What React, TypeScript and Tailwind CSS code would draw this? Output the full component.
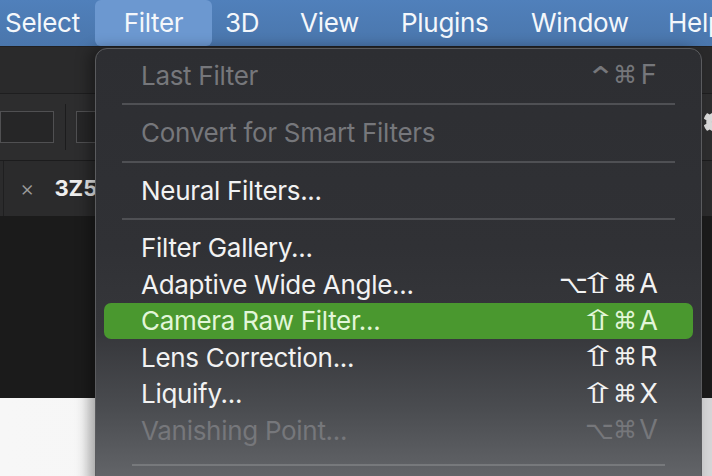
import React from "react";
import { FaCog } from "react-icons/fa";

type Row =
  | { kind: "sep"; cls?: string }
  | { kind: "item"; label: string; keys?: string; disabled?: boolean; active?: boolean };

const rows: Row[] = [
  { kind: "item", label: "Last Filter", keys: "⌃⌘F", disabled: true },
  { kind: "sep" },
  { kind: "item", label: "Convert for Smart Filters", disabled: true },
  { kind: "sep" },
  { kind: "item", label: "Neural Filters..." },
  { kind: "sep" },
  { kind: "item", label: "Filter Gallery..." },
  { kind: "item", label: "Adaptive Wide Angle...", keys: "⌥⇧⌘A" },
  { kind: "item", label: "Camera Raw Filter...", keys: "⇧⌘A", active: true },
  { kind: "item", label: "Lens Correction...", keys: "⇧⌘R" },
  { kind: "item", label: "Liquify...", keys: "⇧⌘X" },
  { kind: "item", label: "Vanishing Point...", keys: "⌥⌘V", disabled: true },
  { kind: "sep", cls: "last" },
];

function Glyph({ k }: { k: string }) {
  if (/[A-Z]/.test(k))
    return <span className="w-[19px] text-center font-['Inter',sans-serif] text-[27px]">{k}</span>;
  if (k === "⇧")
    return (
      <span className="flex w-[22px] justify-center overflow-visible">
        <span className="inline-block scale-x-[1.6] font-['DejaVu_Sans',sans-serif] text-[28px] leading-[30px]">{k}</span>
      </span>
    );
  if (k === "⌥")
    return <span className="w-[24px] text-center font-['DejaVu_Sans',sans-serif] text-[25px]">{k}</span>;
  if (k === "⌃")
    return (
      <span className="flex w-[18px] justify-center">
        <span className="inline-block mt-[6px] scale-x-[1.2] font-['DejaVu_Sans',sans-serif] text-[30px] leading-[30px]">{k}</span>
      </span>
    );
  return <span className="w-[22px] text-center font-['DejaVu_Sans',sans-serif] text-[24px]">{k}</span>;
}

function Keys({ keys }: { keys: string }) {
  return (
    <div className="flex h-full items-center gap-[4px]">
      {Array.from(keys).map((k, i) => (
        <Glyph key={i} k={k} />
      ))}
    </div>
  );
}

export default function App() {
  return (
    <div className="relative w-[712px] h-[476px] overflow-hidden bg-[#1b1b1b] font-['Inter',sans-serif]">
      {/* macOS menu bar */}
      <div className="flex h-[46px] items-stretch overflow-hidden bg-[linear-gradient(to_bottom,#5080bb,#4a76ac)] pl-[5px] text-[26px] leading-[46px] text-[#f4f7fb] tracking-[-0.3px]">
        <div className="w-[90px] shrink-0">Select</div>
        <div className="w-[117px] shrink-0 rounded-md bg-[#6c98d0] text-center">Filter</div>
        <div className="w-[75px] shrink-0 pl-[13px]">3D</div>
        <div className="w-[101px] shrink-0 pl-[13px]">View</div>
        <div className="w-[130px] shrink-0 pl-[13px]">Plugins</div>
        <div className="w-[137px] shrink-0 pl-[13px]">Window</div>
        <div className="shrink-0 pl-[13px] whitespace-nowrap">Help</div>
      </div>

      {/* app header row */}
      <div className="h-[47px] border-t border-[#202022] bg-[#2a2a2b]" />
      {/* options toolbar */}
      <div className="relative flex h-[67px] items-center border-t border-[#1e1e1f] bg-[#2d2d2e]">
        <div className="h-[32px] w-[54px] border border-[#505052] bg-[#262627]" />
        <div className="ml-[11px] h-[46px] w-px bg-[#1c1c1d]" />
        <div className="ml-[10px] h-[32px] w-[60px] border border-[#505052] bg-[#262627]" />
        <FaCog className="absolute left-[703px] top-[15px] text-[#d8d8d8]" size={26} />
      </div>
      {/* document tab row */}
      <div className="flex h-[56px] items-center border-t border-[#1c1c1d] bg-[#2b2b2c]">
        <div className="ml-[3px] h-full w-px bg-[#1f1f20]" />
        <span className="ml-[16px] text-[22px] font-light text-[#9b9b9b]">×</span>
        <span className="ml-[20px] text-[22px] font-bold text-[#eeeeee]">3Z5</span>
      </div>
      {/* canvas area */}
      <div className="h-[182px] bg-[#1b1b1b]" />
      <div className="flex h-[78px]">
        <div className="flex-1 bg-[linear-gradient(to_right,#f7f7f7_0%,#f5f5f5_70%,#d9d9d9_100%)]" />
        <div className="w-[10px] bg-[#d5d5d7]" />
      </div>

      {/* Filter dropdown menu */}
      <div className="absolute left-[95px] top-[48px] h-[440px] w-[607px] rounded-t-[12px] border border-[#5a5b5e] bg-[linear-gradient(to_bottom,#2d2e32_0%,#303135_45%,#36373b_65%,#4a4c50_82%,#66686c_100%)] pt-[8px] shadow-[-6px_0_14px_rgba(0,0,0,0.35)]">
        {rows.map((r, i) =>
          r.kind === "sep" ? (
            r.cls === "last" ? (
              <div key={i} className="mx-[36px] pt-[15px]">
                <div className="h-[2px] bg-[#77797c]" />
              </div>
            ) : (
              <div key={i} className="mx-[26px] flex h-[21px] items-center">
                <div className="h-[2px] w-full bg-[#4f5054]" />
              </div>
            )
          ) : (
            <div
              key={i}
              className={
                "mx-[8px] flex h-[36.5px] items-center justify-between rounded-[7px] pl-[37px] pr-[35px] text-[26px] tracking-[-0.3px] " +
                (r.active
                  ? "bg-[#4a982f] text-[#e2f6d9]"
                  : r.disabled
                  ? "text-[#76777b]"
                  : "text-[#f2f2f2]")
              }
            >
              <span className="whitespace-nowrap">{r.label}</span>
              {r.keys ? <Keys keys={r.keys} /> : null}
            </div>
          )
        )}
      </div>
    </div>
  );
}
